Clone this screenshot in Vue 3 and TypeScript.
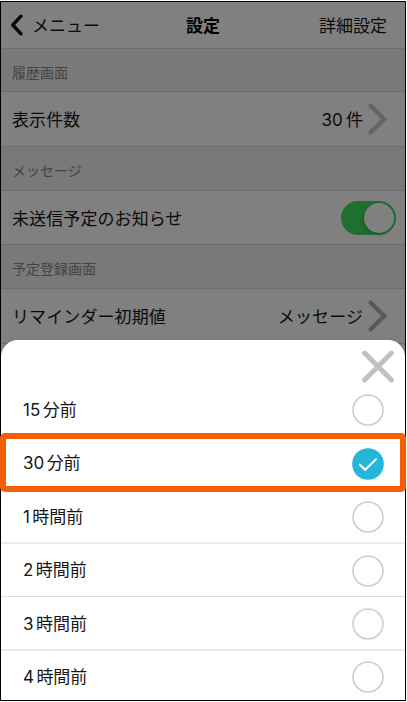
<script setup lang="ts">
import { ref } from 'vue'

interface ReminderOption {
  amount: number
  unit: string
}

const options: ReminderOption[] = [
  { amount: 15, unit: '分前' },
  { amount: 30, unit: '分前' },
  { amount: 1, unit: '時間前' },
  { amount: 2, unit: '時間前' },
  { amount: 3, unit: '時間前' },
  { amount: 4, unit: '時間前' },
]
const selected = ref(1)
const notify = ref(true)
</script>

<template>
  <div class="phone">
    <header class="nav">
      <div class="back">
        <svg class="back-icon" width="13" height="22" viewBox="0 0 13 22">
          <path d="M11 2.2 2.7 11 11 19.8" />
        </svg>
        <span>メニュー</span>
      </div>
      <h1>設定</h1>
      <span class="detail">詳細設定</span>
    </header>

    <h2 class="section first">履歴画面</h2>
    <div class="row">
      <span>表示件数</span>
      <span class="value"><span class="num">30</span>件</span>
      <svg class="chevron light" width="20" height="32" viewBox="0 0 20 32">
        <path d="M2.7 2.7 16.2 16 2.7 29.3" />
      </svg>
    </div>

    <h2 class="section">メッセージ</h2>
    <div class="row">
      <span>未送信予定のお知らせ</span>
      <button class="toggle" :class="{ on: notify }" @click="notify = !notify"><i></i></button>
    </div>

    <h2 class="section">予定登録画面</h2>
    <div class="row last">
      <span>リマインダー初期値</span>
      <span class="value">メッセージ</span>
      <svg class="chevron" width="20" height="32" viewBox="0 0 20 32">
        <path d="M2.7 2.7 16.2 16 2.7 29.3" />
      </svg>
    </div>

    <section class="sheet">
      <div class="sheet-head">
        <svg width="34" height="34" viewBox="0 0 34 34">
          <path d="M3.6 4.1 30.4 30.9M30.4 4.1 3.6 30.9" />
        </svg>
      </div>
      <div
        v-for="(option, index) in options"
        :key="index"
        class="option"
        :class="{ chosen: index === selected }"
        @click="selected = index"
      >
        <span class="label"><span class="num">{{ option.amount }}</span>{{ option.unit }}</span>
        <svg class="radio" width="32" height="32" viewBox="0 0 32 32">
          <circle cx="16" cy="16" r="15" />
          <path v-if="index === selected" d="m7.8 16.6 5.4 5.2L24 11.2" />
        </svg>
      </div>
    </section>
  </div>
</template>

<style>
body {
  background: #fff;
}
</style>

<style scoped>
.phone {
  position: relative;
  box-sizing: border-box;
  width: 406px;
  height: 700px;
  margin-top: 1px;
  border: 1px solid #000;
  background: #808080;
  color: #0b0b0b;
  font: 17px/24px "Noto Sans CJK JP", sans-serif;
  display: flow-root;
}
.nav {
  box-sizing: border-box;
  height: 47px;
  display: grid;
  grid-template-columns: 1fr auto 1fr;
  align-items: center;
  padding: 0 18px 0 9px;
  border-bottom: 1px solid #6d6d6d;
}
.back {
  display: flex;
  align-items: center;
  gap: 9px;
}
.back-icon path {
  fill: none;
  stroke: #080808;
  stroke-width: 3.4;
  stroke-linecap: round;
  stroke-linejoin: round;
}
h1 {
  margin: 0 0 0 9px;
  font-size: 17px;
  font-weight: 700;
  line-height: 24px;
  color: #000;
}
.detail {
  text-align: right;
}
.section {
  box-sizing: border-box;
  height: 44px;
  margin: 0;
  padding: 3px 11px 0;
  border-bottom: 1px solid #6d6d6d;
  background: #797979;
  color: #444;
  font-size: 14px;
  font-weight: 400;
  line-height: 40px;
}
.section.first {
  height: 43px;
}
.row {
  box-sizing: border-box;
  height: 55px;
  display: flex;
  align-items: center;
  padding: 0 17px 0 11px;
  border-bottom: 1px solid #6d6d6d;
  letter-spacing: 0.1px;
}
.row + .section + .row {
  height: 54px;
}
.row.last.last {
  height: 55px;
}
.value {
  margin-left: auto;
}
.num {
  font-family: Inter, sans-serif;
  margin-right: 3px;
}
.chevron {
  margin-left: 5px;
  flex: none;
}
.chevron path {
  fill: none;
  stroke: #595959;
  stroke-width: 4.4;
  stroke-linecap: round;
}
.chevron.light path {
  stroke: #646464;
}
.toggle {
  box-sizing: border-box;
  display: flex;
  width: 55px;
  height: 34px;
  margin: 0 -8px 0 auto;
  padding: 2px;
  border: 0;
  border-radius: 17px;
  background: #666;
}
.toggle i {
  width: 30px;
  height: 30px;
  border-radius: 50%;
  background: #808080;
  box-shadow: -1px 1px 4px rgba(0, 0, 0, 0.2);
}
.toggle.on {
  justify-content: flex-end;
  background: #1f6f31;
}
.sheet {
  position: absolute;
  inset: 338px 0 0;
  border-radius: 17px 17px 0 0;
  background: #fff;
  color: #171717;
}
.sheet-head {
  box-sizing: border-box;
  height: 43px;
  padding: 9px 10px 0 0;
  display: flex;
  justify-content: flex-end;
}
.sheet-head path {
  stroke: #c0c0c0;
  stroke-width: 5;
  stroke-linecap: round;
}
.option {
  position: relative;
  box-sizing: border-box;
  height: 53px;
  display: flex;
  align-items: center;
  justify-content: space-between;
  padding: 0 21px 0 22px;
  box-shadow: inset 0 -1px #dcdcdc;
}
.option:nth-child(even) {
  height: 54px;
  box-shadow: inset 0 -2px #ebebeb;
}
.option:last-child {
  height: 52px;
  box-shadow: none;
}
.label {
  padding-bottom: 2px;
}
.label .num {
  margin-right: 2.4px;
}
.radio circle {
  fill: #fff;
  stroke: #cdcdcd;
  stroke-width: 1.6;
}
.chosen .radio circle {
  fill: #25b6da;
  stroke: #25b6da;
}
.radio path {
  fill: none;
  stroke: #fff;
  stroke-width: 2;
  stroke-linecap: round;
}
.chosen::after {
  content: "";
  position: absolute;
  inset: -4px -1px -2px;
  border: 6px solid #f55f05;
  border-radius: 5px;
}
</style>
